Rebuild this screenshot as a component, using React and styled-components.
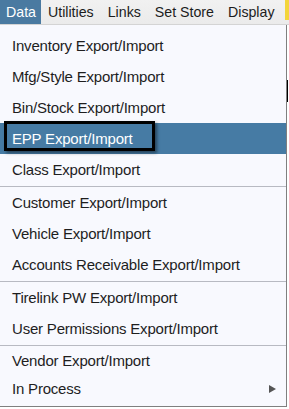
import React from "react";
import styled, { createGlobalStyle } from "styled-components";

const GlobalStyle = createGlobalStyle`
  html, body { margin: 0; padding: 0; background: #ffffff; }
  body { font-family: "Liberation Sans", Arial, sans-serif; }
`;

const Page = styled.div`
  width: 289px;
  height: 409px;
  overflow: hidden;
  background: #ffffff;
`;

const MenuBar = styled.div`
  display: flex;
  align-items: stretch;
  height: 24px;
  border-bottom: 1px solid #d4d4d4;
  background: linear-gradient(#f1f1f1, #ebebeb);
  white-space: nowrap;
`;

const BarItem = styled.div`
  flex: none;
  display: flex;
  align-items: center;
  padding: 0 ${(p) => (p.$active ? "5.5px" : "7.5px")} 0 6px;
  margin-left: ${(p) => (p.$active ? "0" : "0.5px")};
  font-size: 14.2px;
  color: ${(p) => (p.$active ? "#ffffff" : "#1c1c1c")};
  background: ${(p) => (p.$active ? "#4a7aa1" : "transparent")};
`;

const BarMark = styled.div`
  flex: none;
  width: 10px;
  height: 20px;
  margin-left: 3px;
  background: #f3d53a;
`;

const Body = styled.div`
  display: flex;
  align-items: flex-start;
`;

const Dropdown = styled.div`
  width: 286px;
  padding: 5px 0 3px;
  background: #f8f9fe;
  border-right: 1px solid #7f7f7f;
  border-bottom: 1px solid #7f7f7f;
`;

const Edge = styled.div`
  display: flex;
  flex-direction: column;
  width: 2px;
  padding-top: 55px;
`;

const EdgeLine = styled.div`
  width: 1px;
  height: 22px;
  background: #000000;
`;

const Item = styled.div`
  position: relative;
  display: flex;
  align-items: center;
  justify-content: space-between;
  height: ${(p) => p.$h || 31}px;
  padding: 0 10px 0 12px;
  font-size: 15px;
  letter-spacing: -0.2px;
  white-space: nowrap;
  color: ${(p) => (p.$active ? "#ffffff" : "#1e1e1e")};
  background: ${(p) => (p.$active ? "#467ba4" : "transparent")};
`;

const FocusBox = styled.div`
  position: absolute;
  left: 4px;
  top: -2px;
  width: 151px;
  height: 30px;
  box-sizing: border-box;
  border: 3px solid #000000;
  box-shadow: 2px 2px 3px rgba(0, 0, 0, 0.45);
  pointer-events: none;
`;

const Separator = styled.div`
  height: 1px;
  margin-top: 1px;
  background: #b8bac2;
`;

const Arrow = styled.span`
  width: 0;
  height: 0;
  border-top: 4.5px solid transparent;
  border-bottom: 4.5px solid transparent;
  border-left: 7px solid #555555;
`;

const groups = [
  [
    { label: "Inventory Export/Import" },
    { label: "Mfg/Style Export/Import" },
    { label: "Bin/Stock Export/Import" },
    { label: "EPP Export/Import", active: true },
    { label: "Class Export/Import" },
  ],
  [
    { label: "Customer Export/Import" },
    { label: "Vehicle Export/Import" },
    { label: "Accounts Receivable Export/Import" },
  ],
  [
    { label: "Tirelink PW Export/Import" },
    { label: "User Permissions Export/Import" },
  ],
  [
    { label: "Vendor Export/Import", h: 28 },
    { label: "In Process", h: 29, sub: true },
  ],
];

export default function App() {
  return (
    <>
      <GlobalStyle />
      <Page>
        <MenuBar>
          <BarItem $active>Data</BarItem>
          <BarItem>Utilities</BarItem>
          <BarItem>Links</BarItem>
          <BarItem>Set Store</BarItem>
          <BarItem>Display</BarItem>
          <BarMark />
        </MenuBar>
        <Body>
          <Dropdown>
            {groups.map((g, gi) => (
              <React.Fragment key={gi}>
                {gi > 0 && <Separator />}
                {g.map((it) => (
                  <Item key={it.label} $active={it.active} $h={it.h}>
                    <span>{it.label}</span>
                    {it.sub && <Arrow />}
                    {it.active && <FocusBox />}
                  </Item>
                ))}
              </React.Fragment>
            ))}
          </Dropdown>
          <Edge>
            <EdgeLine />
          </Edge>
        </Body>
      </Page>
    </>
  );
}
